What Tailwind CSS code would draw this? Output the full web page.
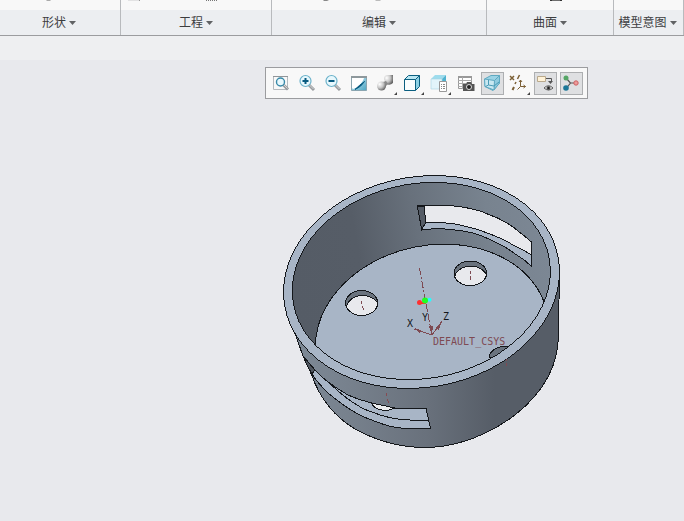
<!DOCTYPE html>
<html lang="zh-CN">
    <head>
        <meta charset="UTF-8">
        <meta name="viewport" content="width=device-width, initial-scale=1.0">
        <title>DEFAULT_CSYS</title>
        <script src="https://cdn.jsdelivr.net/npm/@tailwindcss/browser@4"></script>
    </head>

    <body class="flex flex-col min-h-screen bg-[#e8e9ed] font-['Liberation_Sans','Noto_Sans_CJK_SC',sans-serif] text-xs text-[#3c3d3f]">

        <!-- Ribbon groups -->
        <nav class="grid grid-cols-[121fr_151fr_215fr_127fr_70fr] h-9 border-b border-[#9b9c9f] bg-[#eceef1]">
            <div class="flex flex-col border-r border-[#b8babd]">
                <div class="h-[10px] bg-[#f8f8f8]">
                    <svg class="block ml-[46px] w-2 h-1" viewBox="0 0 8 4"><path d="M0 0H5L4 1H1Z" fill="#aaa"/></svg>
                </div>
                <button class="flex flex-1 items-center justify-center gap-[3px] pr-0.5 whitespace-nowrap">形状
                    <svg class="w-[7px] h-1" viewBox="0 0 7 4"><path d="M0 0H7L3.5 4Z" fill="#606264"/></svg>
                </button>
            </div>
            <div class="flex flex-col border-r border-[#b8babd]">
                <div class="flex h-[10px] bg-[#f8f8f8]">
                    <svg class="block ml-[7px] w-[91px] h-1" viewBox="0 0 91 4"><path d="M0 0H11V1H0Z" fill="#e2e2e3"/><path d="M11 0H12V1H11Z" fill="#999"/><path d="M78 .5H90" stroke="#777" stroke-dasharray="1 1"/></svg>
                </div>
                <button class="flex flex-1 items-center justify-center gap-[3px] whitespace-nowrap">工程
                    <svg class="w-[7px] h-1" viewBox="0 0 7 4"><path d="M0 0H7L3.5 4Z" fill="#606264"/></svg>
                </button>
            </div>
            <div class="flex flex-col border-r border-[#b8babd]">
                <div class="flex h-[10px] bg-[#f8f8f8]">
                    <svg class="block ml-[51px] w-[60px] h-1" viewBox="0 0 60 4"><path d="M0 0H6L4 1H1Z" fill="#888"/><path d="M52 0H58L57 1H53Z" fill="#bbb"/></svg>
                </div>
                <button class="flex flex-1 items-center justify-center gap-[3px] whitespace-nowrap">编辑
                    <svg class="w-[7px] h-1" viewBox="0 0 7 4"><path d="M0 0H7L3.5 4Z" fill="#606264"/></svg>
                </button>
            </div>
            <div class="flex flex-col border-r border-[#b8babd]">
                <div class="flex h-[10px] bg-[#f8f8f8]">
                    <svg class="block ml-[63px] w-3 h-1" viewBox="0 0 12 4"><path d="M0 0H12V1H0Z" fill="#333"/><path d="M2 0H10V.5H2Z" fill="#aaa"/></svg>
                </div>
                <button class="flex flex-1 items-center justify-center gap-[3px] whitespace-nowrap">曲面
                    <svg class="w-[7px] h-1" viewBox="0 0 7 4"><path d="M0 0H7L3.5 4Z" fill="#606264"/></svg>
                </button>
            </div>
            <div class="flex flex-col border-r border-[#b8babd]">
                <div class="h-[10px] bg-[#f8f8f8]"></div>
                <button class="flex flex-1 items-center justify-center gap-[3px] pr-0.5 whitespace-nowrap">模型意图
                    <svg class="w-[7px] h-1" viewBox="0 0 7 4"><path d="M0 0H7L3.5 4Z" fill="#606264"/></svg>
                </button>
            </div>
        </nav>
        <div class="h-6 bg-[#eeeff1]"></div>

        <main class="flex flex-1 flex-col items-end">
            <!-- Graphics toolbar -->
            <div role="toolbar" class="flex items-center gap-1 h-8 mt-[7px] mr-24 px-1 border border-[#9b9c9f] bg-[#f8f8f8]">
                <div class="flex gap-[3px]">
                    <button aria-label="Refit" class="flex items-center justify-center w-[23px] h-[23px] pr-px pb-px">
                        <svg class="w-[18px] h-[18px] shrink-0" viewBox="0 0 18 18" fill="none">
                            <path d="M1.5 2.5H15.5V15.5H1.5Z" stroke="#b5babe"/><path d="M1 2.5H16" stroke="#909599"/>
                            <path d="M11.5 11L16 15.5" stroke="#999c9f" stroke-width="3"/><path d="M12 11L15.5 14.5" stroke="#d5d7d8"/>
                            <circle cx="8.5" cy="8" r="4" fill="#e8f8fd" stroke="#3889a8" stroke-width="1.4"/>
                        </svg>
                    </button>
                    <button aria-label="Zoom in" class="flex items-center justify-center w-[23px] h-[23px] pr-px pb-px">
                        <svg class="w-[18px] h-[18px] shrink-0" viewBox="0 0 18 18" fill="none">
                            <path d="M11 11L16 16" stroke="#999c9f" stroke-width="3"/><path d="M11.5 11L15.5 15" stroke="#d5d7d8"/>
                            <circle cx="7.5" cy="7" r="5.5" fill="#e8f8fd" stroke="#6cb2ca" stroke-width="1.2"/>
                            <path d="M4.5 7H10.5M7.5 4V10" stroke="#075a80" stroke-width="2"/>
                        </svg>
                    </button>
                    <button aria-label="Zoom out" class="flex items-center justify-center w-[23px] h-[23px] pr-px pb-px">
                        <svg class="w-[18px] h-[18px] shrink-0" viewBox="0 0 18 18" fill="none">
                            <path d="M11 11L16 16" stroke="#999c9f" stroke-width="3"/><path d="M11.5 11L15.5 15" stroke="#d5d7d8"/>
                            <circle cx="7.5" cy="7" r="5.5" fill="#e8f8fd" stroke="#6cb2ca" stroke-width="1.2"/>
                            <path d="M4.5 7H10.5" stroke="#075a80" stroke-width="2"/>
                        </svg>
                    </button>
                    <button aria-label="Repaint" class="flex items-center justify-center w-[23px] h-[23px] pr-px pb-px">
                        <svg class="w-[18px] h-[18px] shrink-0" viewBox="0 0 18 18" fill="none">
                            <defs><linearGradient id="paint" x1="0" y1="0" x2="1" y2="1"><stop offset="0" stop-color="#d9eff7"/><stop offset="1" stop-color="#4ba6c4"/></linearGradient></defs>
                            <path d="M1.5 2.5H16.5V16.5H1.5Z" fill="url(#paint)" stroke="#8aa5b0"/><path d="M2 4H14Q13 8 8 13L3 15L2 14Z" fill="#fff"/><path d="M1 3H17" stroke="#8e989c" stroke-width="2"/>
                            <path d="M5 15.500Q9 11.500 14.500 7.500Q11 13 5 15.500Z" fill="#075a80" stroke="#075a80"/>
                        </svg>
                    </button>
                    <button aria-label="Rendering" class="relative flex items-center justify-center w-[23px] h-[23px] pr-px pb-px">
                        <svg class="w-[18px] h-[18px] shrink-0" viewBox="0 0 18 18">
                            <defs><radialGradient id="ball" cx=".3" cy=".3" r=".75"><stop offset="0" stop-color="#fff"/><stop offset=".55" stop-color="#c5c5c5"/><stop offset="1" stop-color="#666"/></radialGradient></defs>
                            <path d="M8 5Q8 1 12 1H17V9Q14 12 10 10Z" fill="url(#ball)"/>
                            <path d="M7 8L10 7L12 10L9 13Z" fill="#8a8a8a"/><circle cx="5.5" cy="12" r="4.5" fill="url(#ball)"/>
                        </svg>
                        <svg class="absolute right-0 bottom-0 w-[3px] h-[3px]" viewBox="0 0 3 3"><path d="M3 0V3H0Z" fill="#444"/></svg>
                    </button>
                </div>
                <button aria-label="Display style" class="relative flex items-center justify-center w-[23px] h-[23px] pr-px pb-px">
                    <svg class="w-[18px] h-[18px] shrink-0" viewBox="0 0 18 18" stroke="#0b5f80" stroke-linejoin="round">
                        <path d="M1.5 5.5L5.5 1.5H16.5L12.5 5.5Z" fill="#b9e6f2"/><path d="M12.5 5.5L16.5 1.5V12.5L12.5 16.5Z" fill="#8cd0e4"/><path d="M1.5 5.5H12.5V16.5H1.5Z" fill="#fafdfe"/>
                    </svg>
                    <svg class="absolute right-0 bottom-0 w-[3px] h-[3px]" viewBox="0 0 3 3"><path d="M3 0V3H0Z" fill="#444"/></svg>
                </button>
                <button aria-label="Saved views" class="relative flex items-center justify-center w-[23px] h-[23px] pr-px pb-px">
                    <svg class="w-[18px] h-[18px] shrink-0" viewBox="0 0 18 18">
                        <path d="M1 5L5 1H16L12 5Z" fill="#9edced"/><path d="M12 5L16 1V9L12 13Z" fill="#50b2d0"/><path d="M1 5H12V15H1Z" fill="#e2f4fa" stroke="#a8d5e3" stroke-width=".6"/>
                        <path d="M9.5 7.5H16.5V17.5H9.5Z" fill="#fff" stroke="#999"/><path d="M11 10.5H12M13 10.5H15M11 12.5H12M13 12.5H15M11 14.5H12M13 14.5H15" stroke="#888"/>
                    </svg>
                    <svg class="absolute right-0 bottom-0 w-[3px] h-[3px]" viewBox="0 0 3 3"><path d="M3 0V3H0Z" fill="#444"/></svg>
                </button>
                <div class="flex gap-[3px]">
                    <button aria-label="View manager" class="flex items-center justify-center w-[23px] h-[23px] pr-px pb-px">
                        <svg class="w-[18px] h-[18px] shrink-0" viewBox="0 0 18 18" fill="none">
                            <path d="M1.5 2.5H14.5V14.5H1.5Z" fill="#fff" stroke="#999"/><path d="M1 3H15" stroke="#999" stroke-width="2"/><path d="M1 6.5H15M1 9.5H9M1 12.5H9M5.5 3V15" stroke="#aaa"/>
                            <path d="M6 10H9L10 8H14L15 10H17.5V17H6Z" fill="#555"/><circle cx="12" cy="13" r="2.5" fill="#222" stroke="#ddd"/>
                        </svg>
                    </button>
                    <button aria-label="Perspective" class="flex items-center justify-center w-[23px] h-[23px] pr-px pb-px border border-[#adafb1] bg-[#dfe0e2]">
                        <svg class="w-[18px] h-[18px] shrink-0" viewBox="0 0 18 18" stroke="#5fa9c1" stroke-linejoin="round">
                            <path d="M1.5 5L8 1.5H16.5V9L10 16.5L2 12.5Z" fill="#9bd3e5"/><path d="M11.5 6.5L16.5 1.5V9L11 16Z" fill="#8fcbdf"/><path d="M1.5 5L11.5 6.5L11 16L2 12.5Z" fill="#c9e8f1"/><path d="M5.500 6V11L2.500 12.500M5.500 11L11 12L16 8" fill="none" stroke="#4b9bb6"/>
                        </svg>
                    </button>
                    <button aria-label="Datum display" class="relative flex items-center justify-center w-[23px] h-[23px] pr-px pb-px">
                        <svg class="w-[18px] h-[18px] shrink-0" viewBox="0 0 18 18" fill="none" stroke="#7b5f35">
                            <path d="M1 2L5 6M5 2L1 6M10.500 1L8.500 5M7 8L6 10" stroke-width="1.500"/><path d="M5 13L3.500 16" stroke-width="2"/>
                            <path d="M11.500 6V12.500H16.500M11.500 12.500L8.500 15.500M10 8L11.500 6L13 8M14.500 11L16.500 12.500L14.500 14"/>
                        </svg>
                        <svg class="absolute right-0 bottom-0 w-[3px] h-[3px]" viewBox="0 0 3 3"><path d="M3 0V3H0Z" fill="#444"/></svg>
                    </button>
                </div>
                <div class="flex gap-[3px]">
                    <button aria-label="Annotation display" class="flex items-center justify-center w-[23px] h-[23px] pr-px pb-px border border-[#adafb1] bg-[#dfe0e2]">
                        <svg class="w-[18px] h-[18px] shrink-0" viewBox="0 0 18 18" fill="none" stroke="#555">
                            <path d="M1.5 2.5H9.5V7.5H1.5Z" fill="#fff2d7" stroke="#b9a98c"/><path d="M10 4.5H15.5V8"/><path d="M12 7H17L14.5 10Z" fill="#555" stroke="none"/>
                            <path d="M8 14Q12.500 9.500 17 14Q12.500 18 8 14Z" fill="#fff"/><circle cx="12.500" cy="14" r="1.600" fill="#222"/>
                        </svg>
                    </button>
                    <button aria-label="Spin center" class="flex items-center justify-center w-[23px] h-[23px] pr-px pb-px border border-[#adafb1] bg-[#dfe0e2]">
                        <svg class="w-[18px] h-[18px] shrink-0" viewBox="0 0 18 18">
                            <path d="M4.500 4.500L8.500 9L4.500 14M8.500 9H14" fill="none" stroke="#555" stroke-width="1.200"/>
                            <circle cx="4" cy="4" r="2.500" fill="#55a565"/><circle cx="4" cy="14" r="2.800" fill="#1c7798"/><circle cx="14" cy="9" r="2.200" fill="#ee9a9a" stroke="#cc6262"/>
                        </svg>
                    </button>
                </div>
            </div>

            <!-- Model -->
            <svg class="w-[284px] h-[276px] mt-[75px] mr-30" viewBox="280 174 284 276" fill="none" stroke="#14171b" shape-rendering="crispEdges">
                <defs>
                    <linearGradient id="outerWall" gradientUnits="userSpaceOnUse" x1="295" y1="0" x2="558" y2="0">
                        <stop offset="0" stop-color="#7d8996"/><stop offset=".2" stop-color="#77818d"/><stop offset=".5" stop-color="#69717c"/><stop offset=".76" stop-color="#565d67"/><stop offset="1" stop-color="#565d67"/>
                    </linearGradient>
                    <linearGradient id="innerWall" gradientUnits="userSpaceOnUse" x1="292" y1="0" x2="550" y2="0">
                        <stop offset="0" stop-color="#555c66"/><stop offset=".28" stop-color="#565d67"/><stop offset=".52" stop-color="#68717c"/><stop offset=".8" stop-color="#78838f"/><stop offset="1" stop-color="#7c8794"/>
                    </linearGradient>
                    <clipPath id="mouth"><ellipse cx="421.300" cy="281" rx="129.900" ry="97.500" transform="rotate(-10 421.300 281)"/></clipPath>
                    <clipPath id="holeA"><ellipse cx="361.700" cy="303" rx="16" ry="12.500"/></clipPath>
                    <clipPath id="holeB"><ellipse cx="470.300" cy="273.300" rx="16.300" ry="12.300"/></clipPath>
                </defs>

                <!-- outer wall -->
                <path d="M559.500 268L558.500 333C558.500 349 555 364 548 377C540 392 529 404 515 415C499 427 480 437 460 442.500C448 446 436 447.500 423 447.500C398 447 375 440 355 429C335 417 320 399 311.700 375L303 356L292 325Z" fill="url(#outerWall)"/>

                <!-- front slot -->
                <path d="M312 374L315 370C320 375 324 379 328 382C335 387 341 391 348 395C357 399 364 401 371.700 403C379 406 385 407 391.700 408H426L430.500 428.500H415C407 429 399 428 391.700 426.700C384 425 377 422 371.700 420C363 417 354 412 348 408C340 403 334 398 328 393C321 386 316 381 312 374Z" fill="#a8b5c6"/>
                <path d="M303 356L315 370L312 374L307 365Z" fill="#4e555e"/>
                <path d="M328 382C337 390 346 399 357 405C363 409 368 411 375 413C384 417 391 418 398 419C406 420 414 420.500 428 420.500"/>
                <path d="M371.700 403C373 407 378 410 385 410.500C390 410.500 393 409 395 408Z" fill="#edeef0"/>
                <path d="M386 393L387 396M387 399L389 403" stroke="#854b52"/>

                <!-- rim -->
                <ellipse cx="421.500" cy="282" rx="138.900" ry="105.300" transform="rotate(-10 421.500 282)" fill="#a8b5c6"/>
                <ellipse cx="421.300" cy="281" rx="129.900" ry="97.500" transform="rotate(-10 421.300 281)" fill="url(#innerWall)"/>

                <g clip-path="url(#mouth)">
                    <ellipse cx="432" cy="336.500" rx="117.600" ry="91.100" transform="rotate(-12 432 336.500)" fill="#a8b5c6"/>
                    <path d="M489 357C490 351 497 346 507 346L512 348L500 360Z" fill="#6a737e"/>
                </g>
                <ellipse cx="421.300" cy="281" rx="129.900" ry="97.500" transform="rotate(-10 421.300 281)"/>

                <!-- back slot -->
                <path d="M417.300 206C430 205 440 205 450 205.700C458 206 464 207 470 208.500C478 210 484 212 490 215C496 217 502 220 506.700 223C512 226 516 229 520 232.700C525 236 528 239 531.700 242.300V266.500C527 262 522 258 516.700 255C510 250 504 246 496.700 242.700C489 239 481 235 473 233C465 231 458 230 450 229.500C440 228 431 229 421.700 229.500Z" fill="#a8b5c6"/>
                <path d="M424.300 206C433 205 442 205 450 205.700C458 206 464 207 470 208.500C478 210 484 212 490 215C496 217 502 220 506.700 223C512 226 516 229 520 232.700C525 236 528 239 531.700 242.300V255C525 251 520 248 513 245C505 240 498 237 490 234C482 231 474 228 466.700 226.700C458 224 450 223 443 222.700H425.700Z" fill="#e8e9ed"/>
                <path d="M417.300 206H424.300L425.700 222.700L421.700 229.500Z" fill="#555c66"/>

                <!-- floor holes -->
                <ellipse cx="361.700" cy="303" rx="16" ry="12.500" fill="#6a737e"/>
                <g clip-path="url(#holeA)"><ellipse cx="362.700" cy="308" rx="16" ry="12.500" fill="#e8e9ed"/></g>
                <ellipse cx="361.700" cy="303" rx="16" ry="12.500"/>
                <ellipse cx="470.300" cy="273.300" rx="16.300" ry="12.300" fill="#6a737e"/>
                <g clip-path="url(#holeB)"><ellipse cx="470.800" cy="278.500" rx="16.300" ry="12.300" fill="#e8e9ed"/></g>
                <ellipse cx="470.300" cy="273.300" rx="16.300" ry="12.300"/>

                <!-- axes and coordinate system -->
                <g stroke="#7e4a52">
                    <path d="M361 301L362 304M362 306L364 310M470 271V274M470 276L471 280M506 359V361M506 363V366"/>
                    <path d="M419.500 268L426 304" stroke-dasharray="7 2 2 2"/><path d="M426 304L432 335" stroke-dasharray="8 2"/>
                    <path d="M432 335L414 329M432 335L442 321"/><path d="M414 328L421 330L420 333ZM442 321L435 328L439 330ZM429 326L432 335L433 326Z" fill="#7e4a52" stroke="none"/>
                </g>
                <g stroke="none" shape-rendering="geometricPrecision">
                    <circle cx="429.500" cy="299.800" r="2" fill="#2ff"/><circle cx="419.500" cy="302.500" r="2.500" fill="#ff3030"/><path d="M420 302H426V304H420Z" fill="#ff3030"/><circle cx="425" cy="300.500" r="3" fill="#20ff20"/>
                </g>
                <g stroke="none" class="font-['DejaVu_Sans_Mono',monospace] text-[10px]">
                    <text x="407" y="327" fill="#14171b">X</text>
                    <text x="422" y="321" fill="#14171b">Y</text>
                    <text x="443" y="320" fill="#14171b">Z</text>
                    <text x="433" y="345" fill="#7e4a52">DEFAULT_CSYS</text>
                </g>
            </svg>
        </main>
    </body>
</html>
